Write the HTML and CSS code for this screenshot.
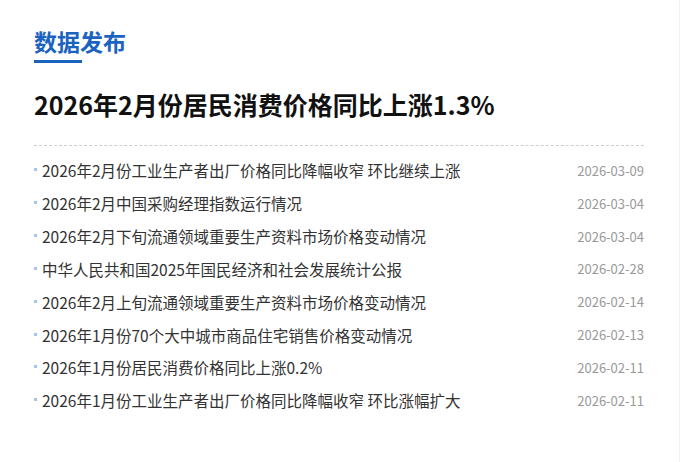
FILE: index.html
```html
<!DOCTYPE html>
<html lang="zh-CN">
<head>
  <meta charset="UTF-8">
  <meta name="viewport" content="width=device-width, initial-scale=1.0">
  <title>数据发布</title>
  <link rel="stylesheet" href="styles.css">
</head>
<body>
  <div class="release-panel">
    <div class="section-head">
      <h2>数据发布</h2>
      <span class="section-bar"></span>
    </div>

    <h1 class="headline">2026年2月份居民消费价格同比上涨1.3%</h1>

    <ul class="release-list">
      <li><span class="item-title">2026年2月份工业生产者出厂价格同比降幅收窄 环比继续上涨</span><span class="item-date">2026-03-09</span></li>
      <li><span class="item-title">2026年2月中国采购经理指数运行情况</span><span class="item-date">2026-03-04</span></li>
      <li><span class="item-title">2026年2月下旬流通领域重要生产资料市场价格变动情况</span><span class="item-date">2026-03-04</span></li>
      <li><span class="item-title">中华人民共和国2025年国民经济和社会发展统计公报</span><span class="item-date">2026-02-28</span></li>
      <li><span class="item-title">2026年2月上旬流通领域重要生产资料市场价格变动情况</span><span class="item-date">2026-02-14</span></li>
      <li><span class="item-title">2026年1月份70个大中城市商品住宅销售价格变动情况</span><span class="item-date">2026-02-13</span></li>
      <li><span class="item-title">2026年1月份居民消费价格同比上涨0.2%</span><span class="item-date">2026-02-11</span></li>
      <li><span class="item-title">2026年1月份工业生产者出厂价格同比降幅收窄 环比涨幅扩大</span><span class="item-date">2026-02-11</span></li>
    </ul>
  </div>
</body>
</html>
```

FILE: styles.css
```css
* {
  box-sizing: border-box;
}

body {
  margin: 0;
  min-height: 100vh;
  background: #fff;
  font-family: "Noto Sans CJK SC", "Noto Sans", sans-serif;
  color: #333;
  border-right: 1px solid #f2f2f2;
}

.release-panel {
  padding: 24px 35px 0 34px;
}

/* Section heading with short blue bar */
.section-head h2 {
  margin: 0;
  font-size: 23px;
  line-height: 34px;
  font-weight: 700;
  color: #1a63c1;
}

.section-bar {
  display: block;
  width: 48px;
  height: 3px;
  margin-top: 2px;
  background: #1a63c1;
}

.headline {
  margin: 23px 0 0;
  font-size: 25px;
  line-height: 36px;
  font-weight: 700;
  color: #111;
  padding-bottom: 23px;
  border-bottom: 1px dashed #cfcfcf;
}

/* News list */
.release-list {
  list-style: none;
  margin: 0;
  padding: 8px 0 0;
}

.release-list li {
  display: flex;
  align-items: center;
  justify-content: space-between;
  height: 32.85px;
}

.item-title {
  position: relative;
  padding-left: 8px;
  font-size: 15.5px;
  color: #333;
}

.item-title::before {
  content: "";
  position: absolute;
  left: 0;
  top: 50%;
  width: 3px;
  height: 3px;
  margin-top: -2px;
  background: #a9c5ea;
}

.item-date {
  font-size: 13px;
  color: #999;
}
```
